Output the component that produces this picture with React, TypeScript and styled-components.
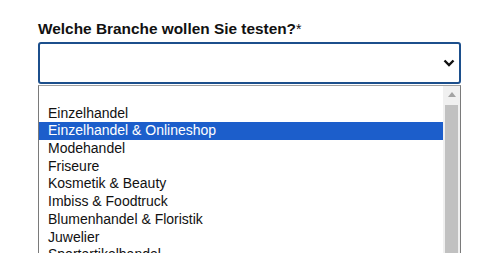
import React from "react";
import styled, { createGlobalStyle } from "styled-components";

const GlobalStyle = createGlobalStyle`
  html, body {
    margin: 0;
    padding: 0;
    background: #ffffff;
    font-family: "Liberation Sans", Arial, sans-serif;
    overflow: hidden;
  }
`;

const Page = styled.div`
  padding: 20px 0 0 38px;
  width: 423px;
  height: 233px;
  overflow: hidden;
`;

const Label = styled.div`
  font-size: 15.4px;
  font-weight: bold;
  color: #111;
  line-height: 17px;
  margin-bottom: 4px;
  > span {
    font-weight: normal;
    font-size: 14px;
  }
`;

const SelectBox = styled.div`
  height: 38px;
  border: 2px solid #1c4f8c;
  border-radius: 3px;
  display: flex;
  align-items: center;
  justify-content: flex-end;
  padding-right: 4px;
  margin-bottom: 1px;
`;

const Dropdown = styled.div`
  display: flex;
  border: 1px solid #7a7a7a;
  border-top-color: #a0a0a0;
  border-bottom: none;
  height: 200px;
`;

const Options = styled.ul`
  flex: 1;
  list-style: none;
  margin: 0;
  padding: 1px 0 0;
`;

const Option = styled.li<{ $selected?: boolean }>`
  height: 17.7px;
  line-height: 17.7px;
  font-size: 14px;
  padding-left: 9px;
  color: ${(p) => (p.$selected ? "#ffffff" : "#111")};
  background: ${(p) => (p.$selected ? "#1c5ecb" : "transparent")};
  white-space: nowrap;
`;

const Scrollbar = styled.div`
  width: 17px;
  background: #f0f0f0;
  display: flex;
  flex-direction: column;
  align-items: center;
`;

const Arrow = styled.div`
  height: 17px;
  display: flex;
  align-items: center;
  justify-content: center;
`;

const Thumb = styled.div`
  width: 13px;
  flex: 1;
  margin-top: 2px;
  background: #c1c1c1;
`;

const options = [
  "",
  "Einzelhandel",
  "Einzelhandel & Onlineshop",
  "Modehandel",
  "Friseure",
  "Kosmetik & Beauty",
  "Imbiss & Foodtruck",
  "Blumenhandel & Floristik",
  "Juwelier",
  "Sportartikelhandel",
];

export default function App() {
  return (
    <>
      <GlobalStyle />
      <Page>
        <Label>
          Welche Branche wollen Sie testen?<span>*</span>
        </Label>
        <SelectBox>
          <svg width="12" height="8" viewBox="0 0 12 8">
            <path d="M1.5 1.5 L6 6 L10.5 1.5" fill="none" stroke="#111" strokeWidth="2.4" />
          </svg>
        </SelectBox>
        <Dropdown>
          <Options>
            {options.map((o, i) => (
              <Option key={i} $selected={i === 2}>
                {o}
              </Option>
            ))}
          </Options>
          <Scrollbar>
            <Arrow>
              <svg width="8" height="5" viewBox="0 0 8 5">
                <path d="M0 5 L4 0 L8 5 Z" fill="#a3a3a3" />
              </svg>
            </Arrow>
            <Thumb />
          </Scrollbar>
        </Dropdown>
      </Page>
    </>
  );
}
